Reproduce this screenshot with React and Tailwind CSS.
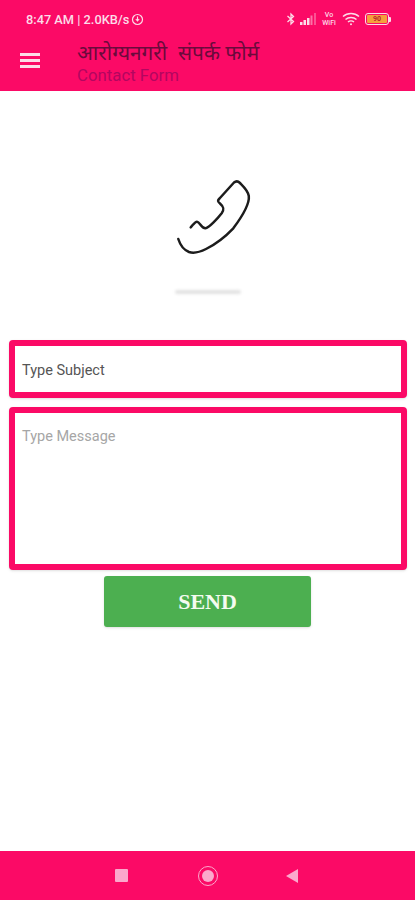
export default function App() {
  return (
    <div className="w-[415px] h-[900px] flex flex-col bg-white overflow-hidden font-['Roboto',sans-serif]">
      {/* header */}
      <div className="h-[91px] shrink-0 bg-[#fb0a66] flex flex-col">
        <div className="h-[39px] pt-[12px] pl-[26px] pr-[24px] flex items-start justify-between text-[#fcdce8]">
          <div className="flex items-center gap-[2px] text-[12.8px] leading-[15px] font-medium">
            <span>8:47 AM | 2.0KB/s</span>
            <svg width="13" height="13" viewBox="0 0 13 13" fill="none" stroke="currentColor">
              <circle cx="6.5" cy="6.5" r="5" strokeWidth="1.2" />
              <path d="M6.5 3.5v4M4.8 6l1.7 2 1.7-2" strokeWidth="1.1" />
            </svg>
          </div>
          <div className="flex items-center gap-[4px] h-[14px]">
            <svg width="10" height="14" viewBox="0 0 10 14" fill="none" stroke="currentColor" strokeWidth="1.3">
              <path d="M1.5 4l6 5.5L5 12V2l2.5 2.5-6 5.500" />
            </svg>
            <svg width="17" height="12" viewBox="0 0 17 12" fill="currentColor">
              <rect x="0" y="9" width="2.5" height="3" />
              <rect x="3.5" y="7" width="2.5" height="5" />
              <rect x="7" y="5" width="2.5" height="7" />
              <rect x="10.5" y="2.5" width="2" height="9.5" opacity="0.5" />
              <rect x="14" y="0" width="2" height="12" opacity="0.35" />
            </svg>
            <div className="flex flex-col items-center w-[16px] text-[7px] leading-[8px] font-medium">
              <span>Vo</span>
              <span>WiFi</span>
            </div>
            <svg width="18" height="14" viewBox="0 0 18 14" fill="none" stroke="currentColor" strokeWidth="1.5" className="ml-[1px]">
              <path d="M1 4.5c4.500-4 11.500-4 16 0M3.500 7.500c3-2.700 8-2.700 11 0M6 10c1.600-1.300 4.400-1.300 6 0" />
              <circle cx="9" cy="12.300" r="1" fill="currentColor" stroke="none" />
            </svg>
            <div className="flex items-center ml-[1px]">
              <div className="w-[24px] h-[12px] rounded-[3px] border border-[#fcdce8] p-[1px]">
                <div className="h-full w-full rounded-[1px] bg-[#f5a03c] flex items-center justify-center text-[7px] leading-none font-bold text-[#b8232f]">
                  90
                </div>
              </div>
              <div className="w-[2px] h-[5px] bg-[#fcdce8] rounded-r-[1px]" />
            </div>
          </div>
        </div>
        <div className="flex pl-[20px]">
          <div className="flex flex-col gap-[3px] mt-[14px] w-[20px]">
            <div className="h-[3px] bg-[#fcdce8]" />
            <div className="h-[3px] bg-[#fcdce8]" />
            <div className="h-[3px] bg-[#fcdce8]" />
          </div>
          <div className="ml-[37px] flex flex-col">
            <div className="text-[20.8px] leading-[26px] text-[#6b0a3c] whitespace-pre font-['Noto_Sans','DejaVu_Sans',sans-serif]">
              आरोग्यनगरी  संपर्क फोर्म
            </div>
            <div className="text-[16.8px] leading-[20px] text-[#b30660]">Contact Form</div>
          </div>
        </div>
      </div>

      {/* phone illustration */}
      <div className="h-[249px] shrink-0 flex flex-col items-center">
        <svg width="90" height="85" viewBox="0 0 90 85" fill="none" stroke="#1c1c1c" strokeWidth="2.5" strokeLinecap="round" strokeLinejoin="round" className="mt-[84px] ml-[15px]">
          <path d="M20.700 52.300C23 50 25 46.500 27 46.700C30 47 31 53.500 35.500 53.300C39 53 48 43 51.700 38.300C54.500 34.500 54 32 50 28.500C47.500 26.500 47.500 25.500 49.500 23.500L64 7.500C66 5.800 68 6 70 8C74 12 78 15.500 78.800 21C79.500 27 74 39 63.300 53.300C55 62 45 69.500 36 74C29 77.500 23.500 78.500 19 77C14 75 10.500 71 8.300 64" />
        </svg>
        <div className="w-[66px] h-[4px] mt-[30px] rounded-full bg-[#e2e2e2] blur-[1.5px]" />
      </div>

      {/* form */}
      <div className="px-[9px] flex flex-col gap-[9px]">
        <div className="h-[58px] w-[398px] border-[6px] border-[#fb0a66] rounded-[4px] bg-white flex items-center pl-[7px] pt-[3px] text-[14.5px] text-[#555555] shadow-sm">
          Type Subject
        </div>
        <div className="h-[163px] w-[398px] border-[6px] border-[#fb0a66] rounded-[4px] bg-white pl-[7px] pt-[14px] text-[14.5px] leading-[20px] text-[#a6a6a6] shadow-sm">
          Type Message
        </div>
      </div>

      <div className="flex mt-[6px] pl-[104px]">
        <button className="w-[207px] h-[51px] rounded-[3px] bg-[#4caf50] text-[#f4fbf0] text-[22px] font-bold font-['Liberation_Serif',serif] shadow-sm">
          SEND
        </button>
      </div>

      <div className="flex-1" />

      {/* nav bar */}
      <div className="h-[49px] shrink-0 bg-[#fb0a66] flex items-center">
        <div className="w-[13px] h-[13px] ml-[115px] rounded-[1px] bg-[#fba8cc]" />
        <div className="w-[20px] h-[20px] ml-[70px] rounded-full border-[1.5px] border-[#fba8cc] flex items-center justify-center">
          <div className="w-[12px] h-[12px] rounded-full bg-[#fba8cc]" />
        </div>
        <svg width="14" height="16" viewBox="0 0 14 16" className="ml-[67px]">
          <path d="M13 1v14L1 8z" fill="#fba8cc" />
        </svg>
      </div>
    </div>
  );
}
